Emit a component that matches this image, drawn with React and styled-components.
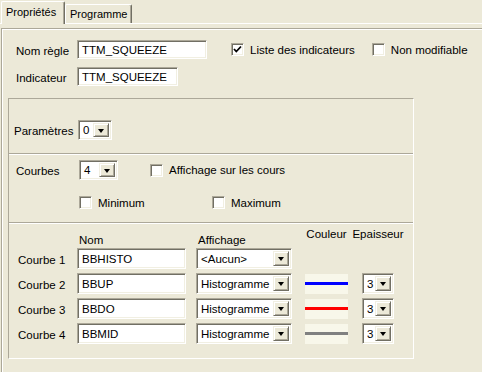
import React from "react";
import styled, { createGlobalStyle } from "styled-components";

const GlobalStyle = createGlobalStyle`
  body {
    margin: 0;
    background: #ece9d8;
    font-family: "Liberation Sans", Arial, sans-serif;
    font-size: 11.5px;
    color: #000;
  }
`;

const Window = styled.div`
  width: 482px;
  height: 372px;
  overflow: hidden;
  background: #ece9d8;
`;

const TabStrip = styled.div`
  display: flex;
  align-items: flex-end;
  height: 23px;
  padding-left: 1px;
`;

const Tab = styled.div`
  position: relative;
  z-index: 1;
  box-sizing: border-box;
  width: ${(p) => p.$w}px;
  height: ${(p) => (p.$active ? 23 : 19)}px;
  margin-bottom: ${(p) => (p.$active ? -1 : 0)}px;
  padding: ${(p) => (p.$active ? "0 0 2px 4px" : "0 0 0 4px")};
  display: flex;
  align-items: center;
  font-size: 11px;
  background: #ece9d8;
  border-top: 1px solid #fff;
  border-left: 1px solid #fff;
  border-right: 1px solid #716f64;
  box-shadow: inset -1px 0 #aca899;
  border-radius: 2px 2px 0 0;
`;

const TabPage = styled.div`
  border-top: 1px solid #fff;
  padding: 4px 0 0 1px;
`;

const Frame = styled.div`
  width: 600px;
  height: 400px;
  border-top: 1px solid #aca899;
  border-left: 1px solid #aca899;
  box-shadow: inset 1px 1px #fff;
  padding: 11px 0 0 0;
`;

const FieldRow = styled.div`
  display: flex;
  align-items: center;
  margin-top: ${(p) => p.$mt || 0}px;
  padding-left: 14px;
`;

const Label = styled.span`
  width: ${(p) => p.$w}px;
  flex: none;
  white-space: nowrap;
  padding-top: 2px;
`;

const sunken = `
  box-sizing: border-box;
  background: #fff;
  border: 1px solid;
  border-color: #aca899 #fff #fff #aca899;
  box-shadow: inset 1px 1px #716f64, inset -1px -1px #f1efe2;
`;

const TextField = styled.div`
  ${sunken}
  width: ${(p) => p.$w}px;
  height: ${(p) => p.$h || 19}px;
  padding: 1px 0 0 4px;
  display: flex;
  align-items: center;
  white-space: nowrap;
  flex: none;
`;

const ComboBox = styled.div`
  ${sunken}
  width: ${(p) => p.$w}px;
  height: ${(p) => p.$h || 20}px;
  display: flex;
  align-items: stretch;
  padding: 2px;
  flex: none;
`;

const ComboValue = styled.span`
  flex: 1;
  display: flex;
  align-items: center;
  padding-left: 2px;
  white-space: nowrap;
  overflow: hidden;
`;

const DropButton = styled.span`
  box-sizing: border-box;
  width: 16px;
  flex: none;
  background: #ece9d8;
  border: 1px solid;
  border-color: #f1efe2 #716f64 #716f64 #f1efe2;
  box-shadow: inset 1px 1px #fff, inset -1px -1px #aca899;
  display: flex;
  align-items: center;
  justify-content: center;
`;

const Arrow = styled.span`
  width: 0;
  height: 0;
  border-left: 3.5px solid transparent;
  border-right: 3.5px solid transparent;
  border-top: 4px solid #000;
  margin-top: 1px;
`;

const CheckItem = styled.label`
  display: flex;
  align-items: center;
  gap: 6px;
  flex: none;
  width: ${(p) => (p.$w ? `${p.$w}px` : "auto")};
  margin-left: ${(p) => p.$ml || 0}px;
  white-space: nowrap;
`;

const Box = styled.span`
  ${sunken}
  width: 13px;
  height: 13px;
  flex: none;
  display: flex;
  align-items: center;
  justify-content: center;
`;

const Panel = styled.div`
  box-sizing: border-box;
  width: 406px;
  height: 261px;
  margin: 12px 0 0 6px;
  border: 1px solid;
  border-color: #aca899 #fff #fff #aca899;
`;

const Divider = styled.div`
  border-top: 1px solid #aca899;
  border-bottom: 1px solid #fff;
`;

const ParamSection = styled.div`
  height: 54px;
  box-sizing: border-box;
  padding: 21px 0 0 5px;
  display: flex;
  align-items: center;
  align-content: flex-start;
  flex-wrap: wrap;
`;

const CurveSection = styled.div`
  height: 67px;
  box-sizing: border-box;
  padding: 5px 0 0 7px;
  display: flex;
  flex-direction: column;
  gap: 16px;
`;

const CurveRow = styled.div`
  display: flex;
  align-items: center;
  padding-left: ${(p) => p.$indent || 0}px;
`;

const GridSection = styled.div`
  display: grid;
  grid-template-columns: 59px 119px 109px 57px 32px;
  grid-template-rows: 20px repeat(4, 21px);
  row-gap: 4px;
  padding-left: 9px;
`;

const HeadCell = styled.div`
  display: flex;
  justify-content: ${(p) => (p.$center ? "center" : "flex-start")};
  width: ${(p) => (p.$w ? `${p.$w}px` : "auto")};
  align-self: ${(p) => (p.$high ? "start" : "end")};
  padding: ${(p) => (p.$high ? "4px 0 0 0" : "0 0 0 2px")};
  margin-bottom: ${(p) => (p.$high ? 0 : -2)}px;
  white-space: nowrap;
`;

const RowLabel = styled.div`
  align-self: center;
  padding-top: 3px;
  white-space: nowrap;
`;

const Swatch = styled.div`
  width: 43px;
  height: 20px;
  align-self: center;
  background: #f8f7ea;
  display: flex;
  align-items: center;

  &::after {
    content: "";
    flex: 1;
    height: 3px;
    background: ${(p) => p.$color};
  }
`;

function Combo({ value, w, h }) {
  return (
    <ComboBox $w={w} $h={h}>
      <ComboValue>{value}</ComboValue>
      <DropButton>
        <Arrow />
      </DropButton>
    </ComboBox>
  );
}

function Check({ label, checked, w, ml }) {
  return (
    <CheckItem $w={w} $ml={ml}>
      <Box>
        {checked && (
          <svg width="9" height="9" viewBox="0 0 9 9">
            <path d="M1 4 L3.3 6.5 L8 1.5" fill="none" stroke="#000" strokeWidth="1.8" />
          </svg>
        )}
      </Box>
      <span>{label}</span>
    </CheckItem>
  );
}

const curves = [
  { n: 1, name: "BBHISTO", display: "<Aucun>" },
  { n: 2, name: "BBUP", display: "Histogramme", color: "#0000ff", width: 3 },
  { n: 3, name: "BBDO", display: "Histogramme", color: "#ff0000", width: 3 },
  { n: 4, name: "BBMID", display: "Histogramme", color: "#808080", width: 3 },
];

export default function App() {
  return (
    <Window>
      <GlobalStyle />
      <TabStrip>
        <Tab $active $w={64}>Propriétés</Tab>
        <Tab $w={67}>Programme</Tab>
      </TabStrip>
      <TabPage>
        <Frame>
          <FieldRow>
            <Label $w={61}>Nom règle</Label>
            <TextField $w={130}>TTM_SQUEEZE</TextField>
            <Check label="Liste des indicateurs" checked ml={24} />
            <Check label="Non modifiable" ml={17} />
          </FieldRow>
          <FieldRow $mt={8}>
            <Label $w={61}>Indicateur</Label>
            <TextField $w={101}>TTM_SQUEEZE</TextField>
          </FieldRow>

          <Panel>
            <ParamSection>
              <Label $w={64}>Paramètres</Label>
              <Combo value="0" w={34} />
            </ParamSection>
            <Divider />
            <CurveSection>
              <CurveRow>
                <Label $w={63}>Courbes</Label>
                <Combo value="4" w={39} />
                <Check label="Affichage sur les cours" ml={32} />
              </CurveRow>
              <CurveRow $indent={63}>
                <Check label="Minimum" w={133} />
                <Check label="Maximum" />
              </CurveRow>
            </CurveSection>
            <Divider />
            <GridSection>
              <div />
              <HeadCell>Nom</HeadCell>
              <HeadCell>Affichage</HeadCell>
              <HeadCell $high $center $w={43}>Couleur</HeadCell>
              <HeadCell $high $center>Epaisseur</HeadCell>
              {curves.map((c) => (
                <React.Fragment key={c.n}>
                  <RowLabel>Courbe {c.n}</RowLabel>
                  <TextField $w={109} $h={21}>{c.name}</TextField>
                  <Combo value={c.display} w={96} h={21} />
                  {c.color ? <Swatch $color={c.color} /> : <div />}
                  {c.width ? <Combo value={c.width} w={32} h={21} /> : <div />}
                </React.Fragment>
              ))}
            </GridSection>
          </Panel>
        </Frame>
      </TabPage>
    </Window>
  );
}
